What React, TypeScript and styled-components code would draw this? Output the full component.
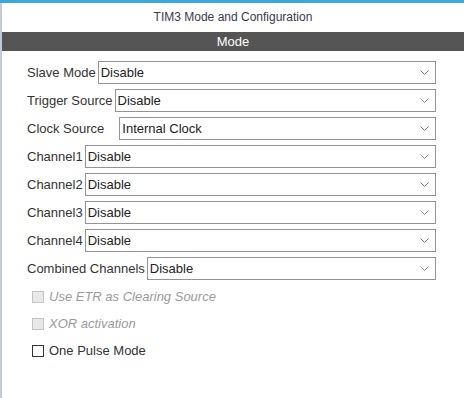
import React from "react";
import styled, { createGlobalStyle } from "styled-components";

const Global = createGlobalStyle`
  html, body { margin: 0; padding: 0; background: #ffffff; }
  body { font-family: "Liberation Sans", Arial, sans-serif; }
  * { box-sizing: border-box; }
`;

const Frame = styled.div`
  width: 464px;
  height: 398px;
  display: flex;
  flex-direction: column;
  background: #ffffff;
  overflow: hidden;
`;

const TopBar = styled.div`
  height: 3px;
  flex: none;
  background: #3ba7db;
`;

const Body = styled.div`
  flex: 1;
  display: flex;
  flex-direction: column;
  border-left: 2px solid #c2ccd5;
`;

const Title = styled.div`
  height: 29px;
  line-height: 29px;
  text-align: center;
  font-size: 12px;
  color: #3a3a48;
`;

const SectionHeader = styled.div`
  height: 19px;
  line-height: 19px;
  text-align: center;
  background: #545554;
  color: #ffffff;
  font-size: 13px;
`;

const Content = styled.div`
  padding: 10px 28px 0 25px;
  display: flex;
  flex-direction: column;
`;

const Fields = styled.div`
  display: flex;
  flex-direction: column;
  gap: 5px;
`;

const Row = styled.div`
  display: flex;
  align-items: center;
  height: 23px;
`;

const Label = styled.span`
  font-size: 13px;
  color: #333333;
  white-space: nowrap;
  margin-right: 2px;
`;

const SelectBox = styled.div<{ $offset?: number }>`
  flex: 1;
  height: 23px;
  margin-left: ${(p) => p.$offset ?? 0}px;
  border: 1px solid #939393;
  display: flex;
  align-items: center;
  justify-content: space-between;
  padding: 0 6px 0 2px;
  font-size: 13px;
  color: #222222;
  background: #ffffff;
`;

const Chevron = styled.svg`
  width: 9px;
  height: 5px;
  flex: none;
`;

const CheckGroup = styled.div`
  display: flex;
  flex-direction: column;
  padding: 3px 0 0 5px;
`;

const CheckRow = styled.div`
  display: flex;
  align-items: center;
  height: 27px;
  gap: 5px;
`;

const Box = styled.span<{ $disabled?: boolean }>`
  width: 12px;
  height: 12px;
  flex: none;
  border: 1px solid ${(p) => (p.$disabled ? "#c4c4c4" : "#333333")};
  background: ${(p) => (p.$disabled ? "#e8e8e8" : "#ffffff")};
`;

const CheckText = styled.span<{ $disabled?: boolean }>`
  font-size: 13px;
  color: ${(p) => (p.$disabled ? "#9a9a9a" : "#333333")};
  font-style: ${(p) => (p.$disabled ? "italic" : "normal")};
`;

const Select = ({ value, offset }: { value: string; offset?: number }) => (
  <SelectBox $offset={offset}>
    <span>{value}</span>
    <Chevron viewBox="0 0 9 5">
      <polyline points="0.5,0.5 4.5,4.5 8.5,0.5" fill="none" stroke="#8a8a8a" strokeWidth="1" />
    </Chevron>
  </SelectBox>
);

const fields: { label: string; value: string; offset?: number }[] = [
  { label: "Slave Mode", value: "Disable" },
  { label: "Trigger Source", value: "Disable" },
  { label: "Clock Source", value: "Internal Clock", offset: 13 },
  { label: "Channel1", value: "Disable" },
  { label: "Channel2", value: "Disable" },
  { label: "Channel3", value: "Disable" },
  { label: "Channel4", value: "Disable" },
  { label: "Combined Channels", value: "Disable" },
];

const checks = [
  { label: "Use ETR as Clearing Source", disabled: true },
  { label: "XOR activation", disabled: true },
  { label: "One Pulse Mode", disabled: false },
];

export default function App() {
  return (
    <>
      <Global />
      <Frame>
        <TopBar />
        <Body>
          <Title>TIM3 Mode and Configuration</Title>
          <SectionHeader>Mode</SectionHeader>
          <Content>
            <Fields>
              {fields.map((f) => (
                <Row key={f.label}>
                  <Label>{f.label}</Label>
                  <Select value={f.value} offset={f.offset} />
                </Row>
              ))}
            </Fields>
            <CheckGroup>
              {checks.map((c) => (
                <CheckRow key={c.label}>
                  <Box $disabled={c.disabled} />
                  <CheckText $disabled={c.disabled}>{c.label}</CheckText>
                </CheckRow>
              ))}
            </CheckGroup>
          </Content>
        </Body>
      </Frame>
    </>
  );
}
